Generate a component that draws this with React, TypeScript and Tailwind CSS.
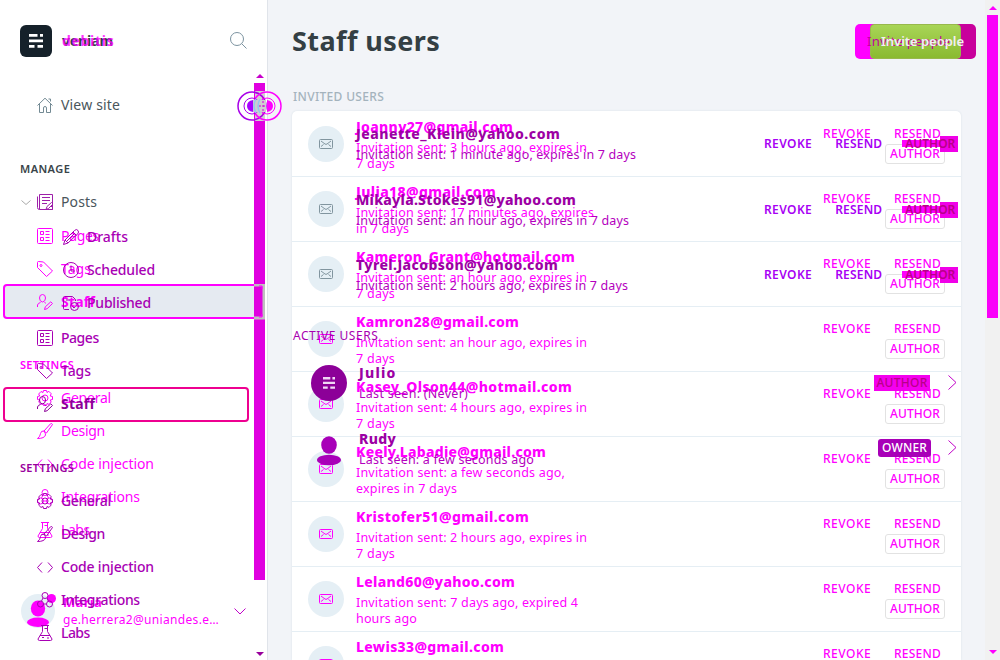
import { useLayoutEffect, useRef } from 'react';
import type { ReactNode } from 'react';

const M = '#ff00ff';
const P = '#a800b8';

/** Single line of text whose letter spacing is adjusted so that it spans `w` pixels. */
function Fit({ w, className = '', children }: { w: number; className?: string; children: string }) {
  const ref = useRef<HTMLSpanElement>(null);
  useLayoutEffect(() => {
    const el = ref.current;
    if (!el) return;
    el.style.letterSpacing = '0px';
    const natural = el.getBoundingClientRect().width;
    el.style.letterSpacing = `${(w - natural) / (children.length - 0.5)}px`;
  }, [w, children]);
  return <span ref={ref} className={`inline-block w-fit shrink-0 whitespace-nowrap ${className}`}>{children}</span>;
}

type IconName = 'home' | 'posts' | 'pages' | 'tags' | 'staff' | 'gear' | 'brush' | 'code' | 'integrations' | 'labs' | 'pencil' | 'clock' | 'published';

const shapes: Record<IconName, ReactNode> = {
  home: <path d="M.5 8.500 8 1.200l7.500 7.300M2.500 7v8.500h4V11q0-1.500 1.500-1.500T9.500 11v4.500h4V7M11.500 2h2v2.500" />,
  posts: <path d="M2.500.5h13v15h-13zM.5 2.500v11q0 2 2 2M5 3.500h8M5 6.500h8M5 9.500h5M9 15.500l1-3 4.500-4 1.500 1.500-4.500 4.500zM13 12.500h2.500v3H11" />,
  pages: <path d="M1.500.5h13q1 0 1 1v13q0 1-1 1h-13q-1 0-1-1v-13q0-1 1-1zM3.500 3.500h3v3h-3zM3.500 9.500h3v3h-3zM8.500 3.500h4M8.500 6.500h4M8.500 9.500h4M8.500 12.500h4" />,
  tags: <><path d="M.5 1.500v5l9 9 6-5.500-9-9-5-.5q-1 0-1 1z" /><circle cx="4" cy="4.500" r="1" /></>,
  staff: <path d="M5.500.5q3 0 3 3.500 0 3.500-3 4-3-.5-3-4 0-3.500 3-3.500zM.5 13V11q.5-2 3-2.500M7.500 8.500q1 .3 1.500 1M7.500 15.500l.8-2.700 5.500-5 1.700 1.700-5.300 5.200z" />,
  gear: <><circle cx="8" cy="8" r="3" /><path d="M6.500.5h3l.5 2 1.800-1.200 2.400 2.400L13.200 6l2.300.5v3l-2.300.5 1 2-2.200 2.400L10 13.500l-.5 2h-3l-.5-2-2 .9-2.300-2.300 1-2.100L.5 9.500v-3l2.200-.5-1-2L4 1.500l2 1z" /></>,
  brush: <path d="M7 8 13.500.8q1.500-.8 2 .7L9.500 10zM7 8q-3-.5-3.500 2.500-.2 3-3 5 7 0 8-3.500.2-1.500-1.500-4z" />,
  code: <path d="M5 3.500.5 8.500 5 13.500M11 3.500l4.500 5-4.500 5" />,
  integrations: <><circle cx="8" cy="3.500" r="3" /><circle cx="3.500" cy="12" r="3" /><circle cx="12.500" cy="12" r="3" /><path d="M6 6 4.500 9M10 6l1.500 3M6.500 12h3" /></>,
  labs: <path d="M4 .5h8M5.500.5v6L1 14q0 1.500 1.500 1.500h11Q15 15.500 15 14l-4.500-7.500v-6M7.500 3.500h3M3 10.500h10M5 12.500h2M10 13h2" />,
  pencil: <path d="M.5 15.500 2 11 11.500 1.500q2-2 3.500 0 1 1.500 0 3L5 14zM10 3l3.500 3.500M2 11l3 3M4 12l8-8" />,
  clock: <><circle cx="8" cy="8" r="7.500" /><path d="M8 3.500V9h4" /></>,
  published: <><path d="M6 14.500H1.500q-1 0-1-1v-11q0-1 1-1h8l3 3V6M3 5h4" /><circle cx="11.500" cy="11.500" r="4" /><path d="m9.500 11.500 1.500 1.500 2.500-3" /></>,
};

function Icon({ name, color }: { name: IconName; color: string }) {
  return (
    <svg width="16" height="16" viewBox="0 0 16 16" fill="none" stroke={color} className="shrink-0 overflow-visible">
      {shapes[name]}
    </svg>
  );
}

function NavItem({ icon, label, w, color, iconColor, className = '' }: { icon: IconName; label: string; w: number; color: string; iconColor?: string; className?: string }) {
  return (
    <div className={`flex h-[33px] shrink-0 items-center gap-2 pl-[37px] ${color} ${className}`}>
      <Icon name={icon} color={iconColor ?? 'currentColor'} />
      <Fit w={w}>{label}</Fit>
    </div>
  );
}

function Bars({ color, size }: { color: string; size: number }) {
  return (
    <svg width={size} height={size} viewBox="0 0 14 14" fill={color}>
      <path d="M0 0h8.500v2.800H0zM11 0h3v2.800h-3zM0 5.500h14v2.800H0zM0 11h5.500v2.800H0zM8.500 11H14v2.800H8.500z" />
    </svg>
  );
}

function Person({ color, className = '' }: { color: string; className?: string }) {
  return (
    <svg width="24" height="30" viewBox="0 0 24 30" fill={color} className={className}>
      <ellipse cx="12" cy="9" rx="7.800" ry="8.700" />
      <ellipse cx="12" cy="24" rx="12" ry="5.200" />
    </svg>
  );
}

function Envelope({ color }: { color: string }) {
  return (
    <svg width="14" height="10" viewBox="0 0 14 10" fill="none" stroke={color}>
      <rect x=".5" y=".5" width="13" height="9" rx="1" />
      <path d="m2 2 4 3q1 .7 2 0l4-3M2 7.500 4.500 5.500M12 7.500 9.500 5.500" />
    </svg>
  );
}

function Arrow({ down, color }: { down?: boolean; color: string }) {
  return (
    <svg width="8" height="4" viewBox="0 0 8 4" fill={color}>
      <path d={down ? 'M0 0h8L4 4z' : 'M0 4h8L4 0z'} />
    </svg>
  );
}

function Sidebar() {
  return (
    <aside className="flex w-[268px] shrink-0 flex-col border-r border-[#e0e4ea] bg-white text-[14px]">
      <div className="flex h-[32px] mt-[25px] shrink-0 items-center pl-5">
        <div className="flex size-8 items-center justify-center rounded-[6px] bg-[#15212a]"><Bars color="#fff" size={14} /></div>
        <div className="relative ml-[10px] -mt-[2px] font-bold text-[#343f44]">
          <Fit w={51}>veniam</Fit>
          <span className="absolute left-0 top-0 text-[#ff00ff] opacity-80"><Fit w={52}>debitis</Fit></span>
        </div>
        <svg className="-mt-[2px] ml-[117px]" width="17" height="17" viewBox="0 0 17 17" fill="none" stroke="#7c93a0"><circle cx="7" cy="7" r="6.500" /><path d="m11.700 11.700 4.800 4.800" /></svg>
      </div>
      <NavItem className="mt-[31px]" icon="home" label="View site" w={59} color="text-[#4a565c]" iconColor="#738a94" />
      <div className="mt-[32px] flex h-[32px] items-center pl-5 text-[11px] font-semibold text-[#394449]"><Fit w={50}>MANAGE</Fit></div>
      <div className="relative">
        <NavItem icon="posts" label="Posts" w={36} color="text-[#4a565c]" iconColor="#9e20aa" />
        <svg className="absolute left-[21px] top-[15px]" width="10" height="5" fill="none" stroke="#a9a9a9"><path d="m.5.5 4.500 4 4.500-4" /></svg>
      </div>
      <NavItem className="mt-px" icon="pages" label="Pages" w={38} color="text-[#ff00ff]" />
      <NavItem icon="tags" label="Tags" w={30} color="text-[#ff00ff]" />
      <div className="-mt-px ml-[3px] flex h-[35px] w-[260px] shrink-0 items-center rounded-[4px] border-2 border-[#ff00ff] bg-[#e5eaf1] font-bold">
        <NavItem className="-ml-[5px]" icon="staff" label="Staff" w={34} color="text-[#ff00ff]" />
      </div>
      <div className="mt-[30px] flex h-[32px] items-center pl-5 text-[11px] font-semibold text-[#ff00ff]"><Fit w={54}>SETTINGS</Fit></div>
      <NavItem icon="gear" label="General" w={50} color="text-[#ff00ff]" />
      <NavItem icon="brush" label="Design" w={44} color="text-[#ff00ff]" />
      <NavItem icon="code" label="Code injection" w={93} color="text-[#ff00ff]" />
      <NavItem icon="integrations" label="Integrations" w={79} color="text-[#ff00ff]" />
      <NavItem icon="labs" label="Labs" w={29} color="text-[#ff00ff]" />
      <div className="mt-[45px] flex h-[40px] shrink-0 items-center pl-[21px] text-[#ff00ff]">
        <div className="relative flex size-[34px] items-start justify-center rounded-full bg-[#e5eff5] pt-[6px]">
          <Person color={M} className="h-[28px] w-[22px]" />
          <span className="absolute -right-px top-0 size-[9px] rounded-full bg-[#ff00ff]" />
        </div>
        <div className="ml-2 flex flex-col text-[12px] leading-[18px]">
          <Fit w={39} className="-mt-px font-bold text-[13px]">Maria</Fit>
          <Fit w={156}>ge.herrera2@uniandes.e…</Fit>
        </div>
        <svg className="ml-[15px]" width="12" height="7" fill="none" stroke="#c000c8"><path d="m.5.5 5.500 5.500 5.500-5.500" /></svg>
      </div>
    </aside>
  );
}

/** Second state of the sidebar, laid over the first one. */
function SidebarOverlay() {
  const c = 'text-[#a800b4] font-medium';
  return (
    <div className="absolute left-0 top-0 flex h-[660px] w-[254px] flex-col pt-[220px] text-[14px]">
      <NavItem className="ml-[26px]" icon="pencil" label="Drafts" w={41} color={c} />
      <NavItem className="ml-[26px]" icon="clock" label="Scheduled" w={68} color={c} />
      <NavItem className="ml-[26px]" icon="published" label="Published" w={64} color={c} />
      <NavItem className="mt-[2px]" icon="pages" label="Pages" w={38} color={c} />
      <NavItem icon="tags" label="Tags" w={30} color={c} />
      <div className="ml-[3px] flex h-[35px] w-[246px] shrink-0 items-center rounded-[4px] border-2 border-[#ee0090] font-bold">
        <NavItem className="-ml-[5px] -mt-[2px]" icon="staff" label="Staff" w={34} color="text-[#8c0098]" />
      </div>
      <div className="mt-[30px] flex h-[32px] shrink-0 items-center pl-5 text-[11px] font-semibold text-[#98009c]"><Fit w={54}>SETTINGS</Fit></div>
      <NavItem icon="gear" label="General" w={50} color={c} />
      <NavItem icon="brush" label="Design" w={44} color={c} />
      <NavItem icon="code" label="Code injection" w={93} color={c} />
      <NavItem icon="integrations" label="Integrations" w={79} color={c} />
      <NavItem icon="labs" label="Labs" w={29} color={c} />
    </div>
  );
}

function SidebarScroll() {
  return (
    <>
      <div className="absolute left-[254px] top-[74px] flex h-[582px] w-[11px] flex-col items-center">
        <Arrow color="#c800cc" />
        <div className="mt-[5px] h-[497px] w-full bg-[#e000e0]" />
        <div className="mt-auto flex"><Arrow down color="#98009c" /></div>
      </div>
      <svg className="absolute left-[254px] top-[284px]" width="11" height="36" fill="none">
        <path d="M0 1h11M0 34h11M10 2v31" stroke="#c0c0c0" strokeWidth="3" />
        <path d="M5 2h3v3M5 33h3v-3" stroke={M} />
      </svg>
      <svg className="absolute left-[236px] top-[90px]" width="47" height="32" viewBox="0 0 47 32" fill="none">
        <path d="M19 1h10v30H19z" fill="#d2ced2" />
        <circle cx="16" cy="16" r="14" stroke="#a800e8" strokeWidth="1.500" />
        <circle cx="31" cy="16" r="14" stroke={M} strokeWidth="1.500" />
        <circle cx="16" cy="16" r="8" stroke="#a800e8" />
        <circle cx="31" cy="16" r="8" stroke={M} />
        <path d="M17 10q-6 1-6 6t6 6z" fill="#a800ff" />
        <path d="M31 10q6 1 6 6t-6 6z" fill={M} />
        <path d="M17 10h13v12H17z" fill="#cfcbd0" />
        <path d="M20 9q-4 7 0 14M24 9q-4 7 0 14" stroke="#8ecbf0" strokeWidth="1.500" />
        <path d="M27 7v18M23 16h6" stroke="#d000d8" strokeDasharray="2 2" />
      </svg>
    </>
  );
}

type Invite = { email: string; w: number; a: string; aw: number; b: string; bw: number; grey?: boolean };

const invites: Invite[] = [
  { email: 'Joanny27@gmail.com', w: 157, a: 'Invitation sent: 3 hours ago, expires in', aw: 231, b: '7 days', bw: 39, grey: true },
  { email: 'Julia18@gmail.com', w: 140, a: 'Invitation sent: 17 minutes ago, expires', aw: 238, b: 'in 7 days', bw: 53, grey: true },
  { email: 'Kameron_Grant@hotmail.com', w: 219, a: 'Invitation sent: an hour ago, expires in', aw: 231, b: '7 days', bw: 39, grey: true },
  { email: 'Kamron28@gmail.com', w: 163, a: 'Invitation sent: an hour ago, expires in', aw: 231, b: '7 days', bw: 39 },
  { email: 'Kasey_Olson44@hotmail.com', w: 216, a: 'Invitation sent: 4 hours ago, expires in', aw: 231, b: '7 days', bw: 39 },
  { email: 'Keely.Labadie@gmail.com', w: 190, a: 'Invitation sent: a few seconds ago,', aw: 209, b: 'expires in 7 days', bw: 101 },
  { email: 'Kristofer51@gmail.com', w: 173, a: 'Invitation sent: 2 hours ago, expires in', aw: 231, b: '7 days', bw: 39 },
  { email: 'Leland60@yahoo.com', w: 159, a: 'Invitation sent: 7 days ago, expired 4', aw: 222, b: 'hours ago', bw: 61 },
  { email: 'Lewis33@gmail.com', w: 148, a: '', aw: 0, b: '', bw: 0 },
];

function InviteRow({ item }: { item: Invite }) {
  return (
    <div className="flex h-[65px] shrink-0 border-b border-[#e5eef4] pl-4 text-[#ff00ff]">
      <div className="mt-[14px] flex size-9 shrink-0 items-center justify-center rounded-full bg-[#e5eff5]">
        <Envelope color={item.grey ? '#81959f' : M} />
      </div>
      <div className="ml-3 flex w-[459px] flex-col items-start pt-[5px]">
        <Fit w={item.w} className="text-[14px] font-extrabold leading-[20px]">{item.email}</Fit>
        {item.a && <Fit w={item.aw} className="mt-[3px] text-[12.5px] leading-[16px]">{item.a}</Fit>}
        {item.b && <Fit w={item.bw} className="text-[12.5px] leading-[16px]">{item.b}</Fit>}
      </div>
      <div className="ml-[8px] flex w-[122px] flex-col items-end pt-[13px] text-[12px] font-medium">
        <div className="flex h-[18px] w-full items-center justify-between pr-1"><Fit w={48}>REVOKE</Fit><Fit w={47}>RESEND</Fit></div>
        <div className="mt-px flex h-[20px] w-[60px] items-center justify-center rounded-[3px] border border-[#e2e2e2]"><Fit w={50}>AUTHOR</Fit></div>
      </div>
    </div>
  );
}

function OldInvite({ email, w, sub, sw, className = 'h-[65px]' }: { email: string; w: number; sub: string; sw: number; className?: string }) {
  return (
    <div className={`flex shrink-0 items-center pl-[64px] ${className}`}>
      <div className="flex w-[408px] flex-col items-start">
        <Fit w={w} className="text-[14px] font-extrabold leading-[22px] text-[#9c00a4]">{email}</Fit>
        <Fit w={sw} className="text-[12.5px] leading-[20px] text-[#b400be]">{sub}</Fit>
      </div>
      <div className="flex items-center text-[12px] font-semibold text-[#a800f4]">
        <Fit w={48}>REVOKE</Fit>
        <Fit w={47} className="ml-[23px]">RESEND</Fit>
        <div className="ml-[20px] flex h-4 w-[56px] items-center justify-center bg-[linear-gradient(#ff00ff,#ff00ff),linear-gradient(#f000e8,#f000e8)] bg-no-repeat text-[#b80088] [background-position:0_4px,100%_0] [background-size:38px_7px,18px_100%]"><Fit w={50}>AUTHOR</Fit></div>
      </div>
    </div>
  );
}

function Chevron() {
  return <svg width="9" height="15" fill="none" stroke="#c000c8"><path d="m.5.500 7.500 7-7.500 7" /></svg>;
}

function MainOverlay() {
  return (
    <div className="absolute left-[292px] top-[111px] flex w-[669px] flex-col">
      <OldInvite email="Jeanette_Klein@yahoo.com" w={204} sub="Invitation sent: 1 minute ago, expires in 7 days" sw={280} />
      <OldInvite className="mt-px h-[65px]" email="Mikayla.Stokes91@yahoo.com" w={220} sub="Invitation sent: an hour ago, expires in 7 days" sw={273} />
      <OldInvite email="Tyrel.Jacobson@yahoo.com" w={202} sub="Invitation sent: 2 hours ago, expires in 7 days" sw={272} />
      <div className="mt-[19px] flex h-[20px] items-center pl-px text-[12px] text-[#a800b0]"><Fit w={85}>ACTIVE USERS</Fit></div>
      <div className="mt-[5px] flex h-[65px] items-center pl-[19px]">
        <div className="mb-[2px] flex size-9 items-center justify-center rounded-full bg-[#8c0098]"><Bars color="#f0d8f4" size={12} /></div>
        <div className="-mt-[2px] ml-3 flex w-[516px] flex-col">
          <Fit w={37} className="text-[14px] font-extrabold leading-[22px] text-[#9c00a4]">Julio</Fit>
          <Fit w={109} className="text-[12.5px] leading-[20px] text-[#b400be]">Last seen: (Never)</Fit>
        </div>
        <div className="mb-[2px] -ml-px flex h-4 w-[56px] items-center justify-center bg-[#f400ee] text-[12px] font-medium text-[#b80088]"><Fit w={51}>AUTHOR</Fit></div>
        <div className="mb-[2px] ml-[18px]"><Chevron /></div>
      </div>
      <div className="flex h-[65px] items-center pl-[25px]">
        <Person color={P} className="mt-[5px]" />
        <div className="ml-[18px] flex w-[519px] flex-col">
          <Fit w={37} className="text-[14px] font-extrabold leading-[22px] text-[#9c00a4]">Rudy</Fit>
          <Fit w={175} className="text-[12.5px] leading-[20px] text-[#b400be]">Last seen: a few seconds ago</Fit>
        </div>
        <div className="mb-px flex h-[18px] w-[53px] items-center justify-center rounded-[3px] bg-[#a800b8] text-[12px] font-medium text-white"><Fit w={45}>OWNER</Fit></div>
        <div className="mb-[2px] ml-[17px]"><Chevron /></div>
      </div>
    </div>
  );
}

export default function App() {
  return (
    <div className="relative flex h-[660px] w-[1000px] overflow-hidden bg-[#f2f4f8] font-['Noto_Sans',sans-serif]">
      <Sidebar />
      <main className="flex w-[717px] shrink-0 flex-col pl-6">
        <div className="mt-[24px] flex h-[35px] shrink-0 items-center justify-between pr-[9px] text-[#343f44]">
          <Fit w={148} className="text-[27px] font-bold">Staff users</Fit>
          <div className="relative flex h-[35px] w-[121px] justify-center rounded-[5px] bg-linear-to-r from-[#ff00ff] from-50% to-[#c8009c] to-50% text-[13px]">
            <div className="h-full w-[91px] rounded-[4px] border border-[#98b84c] bg-linear-to-b from-[#a8d556] to-[#8aba30]" />
            <span className="absolute left-[12px] top-[8px] text-[#c000a0]"><Fit w={83}>Invite people</Fit></span>
            <span className="absolute left-[26px] top-[8px] font-semibold text-[#f4eef4]"><Fit w={83}>Invite people</Fit></span>
          </div>
        </div>
        <div className="mt-[27px] flex h-[22px] shrink-0 items-center pl-px text-[12px] font-medium text-[#a4b3bd]"><Fit w={91}>INVITED USERS</Fit></div>
        <section className="mt-[3px] flex h-[549px] w-[669px] shrink-0 flex-col overflow-hidden rounded-t-[5px] bg-white pt-px shadow-[0_0_2px_#d5dde5]">
          {invites.map((item) => <InviteRow key={item.email} item={item} />)}
        </section>
      </main>
      <div className="flex w-[15px] shrink-0 flex-col items-center bg-[#f1f1f1] pt-[6px] pb-[6px]">
        <Arrow color={M} />
        <div className="mt-[5px] h-[303px] w-[11px] bg-[#fa00fa]" />
        <div className="mt-auto flex"><Arrow down color={M} /></div>
      </div>
      <MainOverlay />
      <SidebarOverlay />
      <SidebarScroll />
    </div>
  );
}
